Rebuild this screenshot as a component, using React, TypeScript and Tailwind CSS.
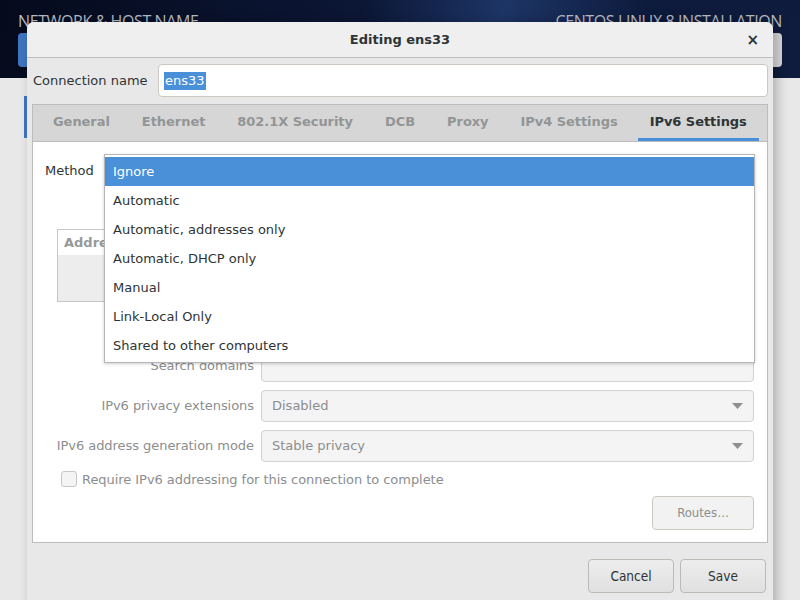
import React from 'react';

const tabs = ['General', 'Ethernet', '802.1X Security', 'DCB', 'Proxy', 'IPv4 Settings', 'IPv6 Settings'];

const methods = [
  'Ignore',
  'Automatic',
  'Automatic, addresses only',
  'Automatic, DHCP only',
  'Manual',
  'Link-Local Only',
  'Shared to other computers',
];

const Arrow: React.FC = () => (
  <svg width="11" height="6" viewBox="0 0 11 6" className="shrink-0">
    <path d="M0 0 L11 0 L5.5 6 Z" fill="#8f9293" />
  </svg>
);

const FieldRow: React.FC<{ label: string; value?: string; combo?: boolean }> = ({ label, value, combo }) => (
  <div className="flex items-center h-[32px]">
    <div className="w-[197px] flex justify-end whitespace-nowrap tracking-[-0.05px] text-[#8b8e8f]">{label}</div>
    <div className="ml-[7px] flex-1 h-full flex items-center justify-between rounded-[4px] border border-[#d3d0cd] bg-[#f4f4f4] pl-[10px] pr-[10px] text-[#8b8e8f]">
      <span>{value}</span>
      {combo && <Arrow />}
    </div>
  </div>
);

const App: React.FC = () => {
  return (
    <div
      className="relative w-[800px] h-[600px] overflow-hidden bg-[#e8e8e8] text-[13px] text-[#2e3436]"
      style={{ fontFamily: '"DejaVu Sans", "Noto Sans", sans-serif' }}
    >
      {/* installer background */}
      <div className="h-[78px] bg-[linear-gradient(100deg,#050a1c_0%,#0c1736_45%,#1d3566_62%,#0d1a3b_80%,#101c3d_100%)] relative">
        <div className="absolute left-[18px] top-[11px] text-[16px] leading-[20px] text-[#b8bcc6] tracking-tight" style={{ fontFamily: '"Open Sans", sans-serif' }}>
          NETWORK &amp; HOST NAME
        </div>
        <div className="absolute right-[18px] top-[11px] text-[16px] leading-[20px] text-[#b8bcc6] tracking-tight" style={{ fontFamily: '"Open Sans", sans-serif' }}>
          CENTOS LINUX 8 INSTALLATION
        </div>
        <div className="absolute left-[18px] top-[33px] w-[30px] h-[34px] rounded-[4px] bg-[#3f74c0]" />
        <div className="absolute right-[18px] top-[33px] w-[30px] h-[34px] rounded-[4px] bg-[#d8d8d8]" />
      </div>
      <div className="absolute left-[24px] top-[96px] w-[3px] h-[42px] bg-[#3f74c0]" />
      <div className="absolute left-[766px] top-[516px] text-[15px] text-[#a0a0a0]">t</div>

      {/* dialog */}
      <div className="absolute left-[27px] top-[22px] w-[746px] h-[590px] rounded-t-[7px] bg-[#e8e8e8] shadow-[4px_0_12px_rgba(0,0,0,0.25)] flex flex-col">
        <div className="relative h-[36px] shrink-0 rounded-t-[7px] bg-[#efefef] border-b border-[#bfbfbf] flex items-center justify-center">
          <span className="font-bold text-[13px] text-[#2e3436]">Editing ens33</span>
          <span className="absolute right-[14px] top-[9px] font-bold text-[15px] leading-[18px] text-[#2e3436]">×</span>
        </div>

        <div className="px-[5px] pt-[6px] flex flex-col">
          <div className="flex items-center h-[33px]">
            <div className="w-[126px] pl-[1px]">Connection name</div>
            <div className="flex-1 h-full rounded-[4px] border border-[#cdc7c2] bg-white flex items-center pl-[5px]">
              <span className="bg-[#4a90d9] text-white px-[1px] leading-[18px]">ens33</span>
            </div>
          </div>

          {/* notebook */}
          <div className="mt-[7px] h-[439px] border border-[#bcbcbc] bg-white flex flex-col">
            <div className="h-[37px] shrink-0 bg-[#d6d6d6] border-b border-[#bcbcbc] flex pl-[4px]">
              {tabs.map((t, i) => (
                <div
                  key={t}
                  className={`mx-[4px] px-[12px] flex items-center font-bold tracking-[-0.05px] border-b-[3px] ${
                    i === tabs.length - 1 ? 'border-[#4a90d9] text-[#2e3436]' : 'border-transparent text-[#929595]'
                  }`}
                >
                  {t}
                </div>
              ))}
            </div>

            <div className="relative flex-1 pl-[12px] pr-[13px] pt-[13px] flex flex-col">
              <div className="flex items-center h-[32px]">
                <div className="w-[59px]">Method</div>
                <div className="flex-1 h-full rounded-[4px] border border-[#cdc7c2] bg-[#f4f4f4]" />
              </div>

              <div className="ml-[12px] mt-[42px] h-[73px] border border-[#c6c6c6] flex flex-col">
                <div className="h-[25px] bg-white flex items-center px-[6px] font-bold text-[#979a9b]">Addre</div>
                <div className="flex-1 bg-[#ededed]" />
              </div>

              <div className="ml-[12px] mt-[8px] flex flex-col gap-[8px]">
                <FieldRow label="" />
                <FieldRow label="Search domains" />
                <FieldRow label="IPv6 privacy extensions" value="Disabled" combo />
                <FieldRow label="IPv6 address generation mode" value="Stable privacy" combo />
              </div>

              <div className="ml-[16px] mt-[9px] flex items-center h-[16px] text-[#8b8e8f]">
                <div className="w-[16px] h-[16px] rounded-[3px] border border-[#c6c6c6] bg-[#f4f4f4]" />
                <span className="ml-[5px] tracking-[-0.05px] leading-[18px] pt-[1px]">Require IPv6 addressing for this connection to complete</span>
              </div>

              <div className="mt-[9px] flex justify-end">
                <div
                  className="w-[102px] h-[34px] rounded-[4px] border border-[#cdc7c2] bg-[#f2f2f2] flex items-center justify-center text-[#8b8e8f]"
                  style={{ fontFamily: '"DejaVu Sans Condensed", "DejaVu Sans", sans-serif' }}
                >
                  Routes…
                </div>
              </div>

              {/* dropdown popup */}
              <div className="absolute left-[71px] top-[12px] w-[651px] bg-white border border-[#b6b6b6] shadow-[0_1px_3px_rgba(0,0,0,0.2)] pt-[2px] pb-[2px]">
                {methods.map((m, i) => (
                  <div
                    key={m}
                    className={`h-[29px] flex items-center pl-[8px] ${i === 0 ? 'bg-[#4a90d9] text-white' : 'text-[#2e3436]'}`}
                  >
                    {m}
                  </div>
                ))}
              </div>
            </div>
          </div>

          <div className="mt-[16px] flex justify-end gap-[6px] pr-[2px]">
            {['Cancel', 'Save'].map((b) => (
              <div
                key={b}
                className="w-[86px] h-[34px] rounded-[4px] border border-[#bdb9b5] bg-[linear-gradient(#ededed,#e0e0e0)] flex items-center justify-center text-[#2e3436] text-[13.5px]"
                style={{ fontFamily: '"DejaVu Sans Condensed", "DejaVu Sans", sans-serif' }}
              >
                {b}
              </div>
            ))}
          </div>
        </div>
      </div>
    </div>
  );
};

export default App;
